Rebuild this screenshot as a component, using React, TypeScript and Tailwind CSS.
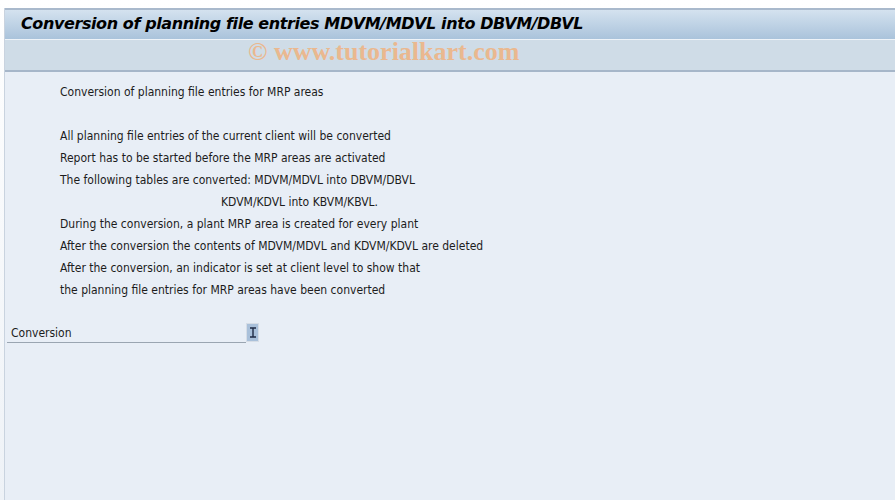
const lines = [
  { text: "All planning file entries of the current client will be converted", indent: false },
  { text: "Report has to be started before the MRP areas are activated", indent: false },
  { text: "The following tables are converted: MDVM/MDVL into DBVM/DBVL", indent: false },
  { text: "KDVM/KDVL into KBVM/KBVL.", indent: true },
  { text: "During the conversion, a plant MRP area is created for every plant", indent: false },
  { text: "After the conversion the contents of MDVM/MDVL and KDVM/KDVL are deleted", indent: false },
  { text: "After the conversion, an indicator is set at client level to show that", indent: false },
  { text: "the planning file entries for MRP areas have been converted", indent: false },
];

function IBeam() {
  return (
    <svg width="8" height="11" viewBox="0 0 8 11">
      <path d="M1 1h6M4 1v9M1 10h6" stroke="#1f2a44" strokeWidth="1.4" fill="none" />
    </svg>
  );
}

export default function App() {
  return (
    <div className="w-[895px] h-[500px] bg-gradient-to-b from-white to-[#eef2f7] pt-2 pl-1 overflow-hidden">
      <div className="h-full border-l border-[#c9d3df] bg-[#e8eef6] flex flex-col">
        <div className="border-t-2 border-[#a9b9cc]">
          <div className="h-[30px] bg-gradient-to-b from-[#d4e2ef] to-[#aac3db] flex items-center pl-4 border-b border-[#eef3f8]">
            <h1 className="text-[16px] font-bold italic text-black font-['DejaVu_Sans',sans-serif] tracking-[-0.4px] -mt-[2px]">
              Conversion of planning file entries MDVM/MDVL into DBVM/DBVL
            </h1>
          </div>
          <div className="h-[32px] bg-[#cfdce7] border-b-2 border-[#a6b6c9] flex items-center pl-[243px]">
            <span className="text-[26px] leading-[26px] font-bold text-[#eab88f] font-['Liberation_Serif',serif] -mt-[7px]">
              © www.tutorialkart.com
            </span>
          </div>
        </div>

        <div className="pl-[55px] pt-[9px] text-[12px] text-[#1c1c1c] font-['DejaVu_Sans_Condensed','DejaVu_Sans',sans-serif] leading-[22px]">
          <p>Conversion of planning file entries for MRP areas</p>
          <div className="h-[22px]" />
          {lines.map((l) => (
            <p key={l.text} className={l.indent ? "pl-[161px]" : ""}>
              {l.text}
            </p>
          ))}
        </div>

        <div className="mt-[22px] pl-[2px] flex items-end">
          <div className="w-[239px] border-b border-[#9aa5b1] pl-[4px] text-[12px] text-[#1c1c1c] font-['DejaVu_Sans_Condensed','DejaVu_Sans',sans-serif] leading-[18px]">
            Conversion
          </div>
          <div className="w-[13px] h-[19px] border border-[#d6dde6] bg-[#a9c0da] flex items-center justify-center mb-[1px]">
            <IBeam />
          </div>
        </div>
      </div>
    </div>
  );
}
